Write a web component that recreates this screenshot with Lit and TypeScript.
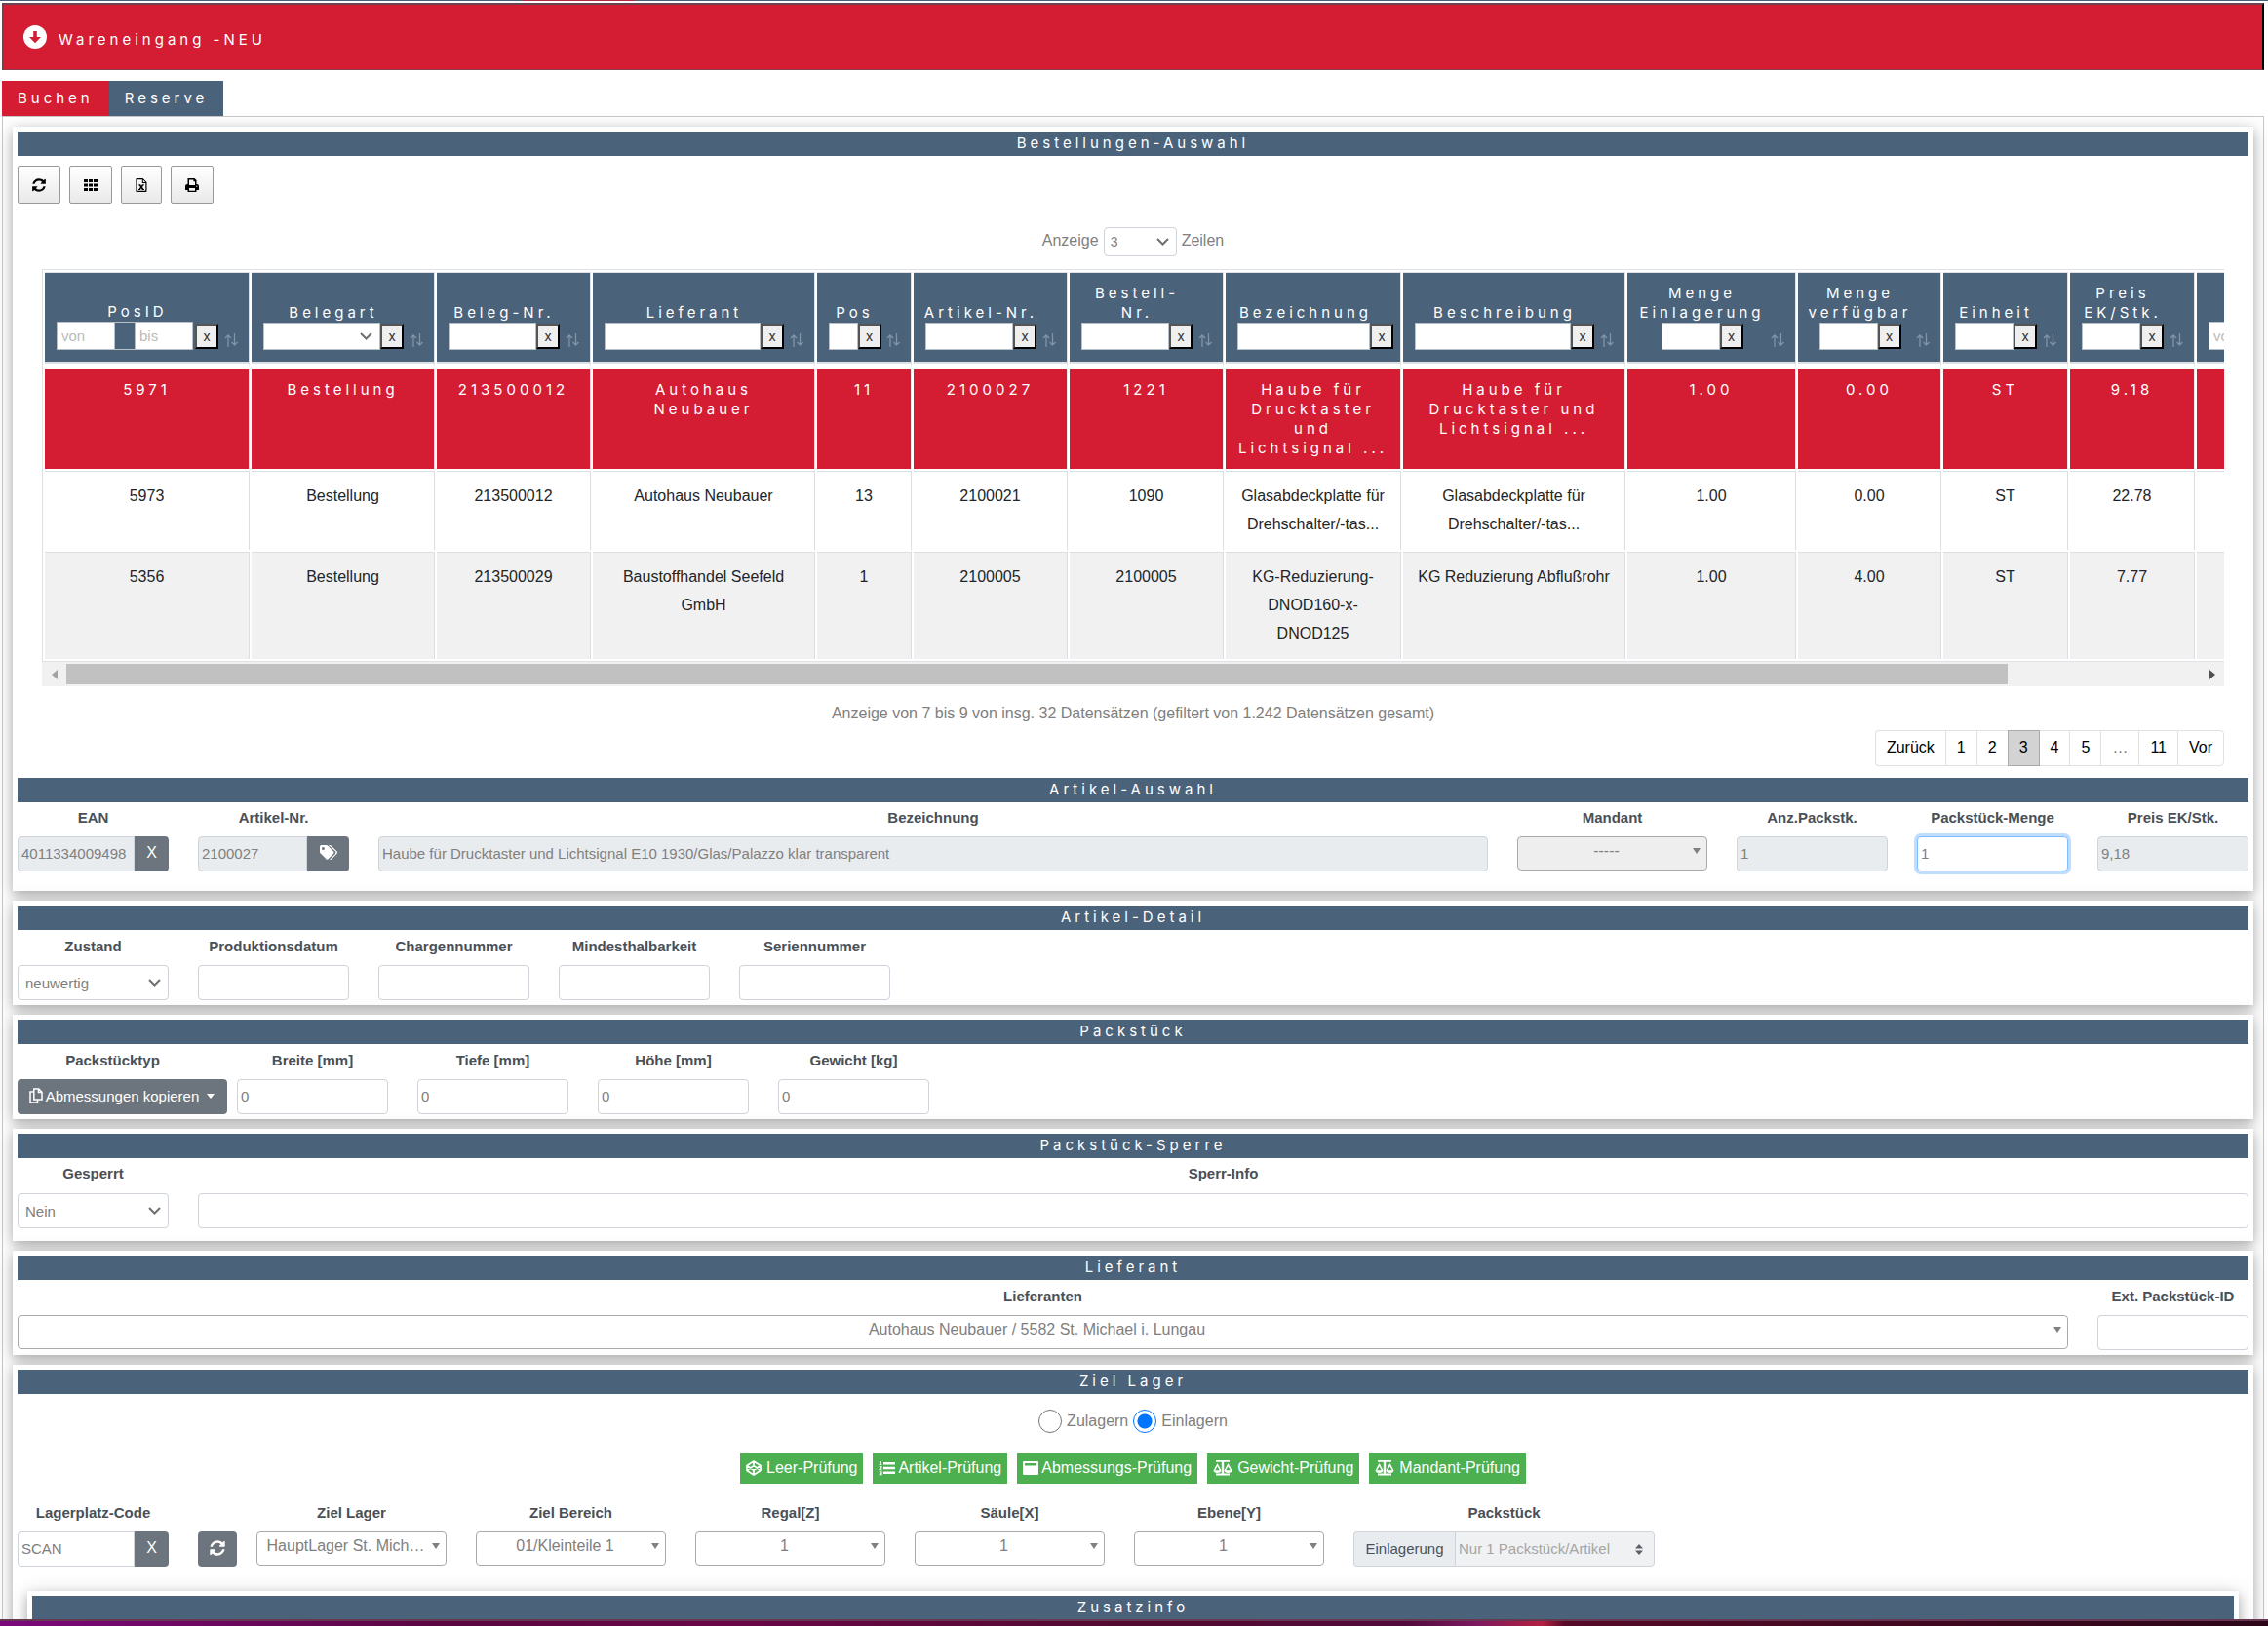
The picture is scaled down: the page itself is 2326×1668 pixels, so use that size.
import { LitElement, html, css, svg, nothing, TemplateResult } from "lit";
import { customElement, state } from "lit/decorators.js";

type Filter = "text" | "select" | "range";
interface Column {
  label: string;
  width: number;
  filter: Filter;
  input: number;
  sort: boolean;
}

const COLUMNS: Column[] = [
  { label: "PosID", width: 210, filter: "range", input: 60, sort: true },
  { label: "Belegart", width: 188, filter: "select", input: 120, sort: true },
  { label: "Beleg-Nr.", width: 158, filter: "text", input: 90, sort: true },
  { label: "Lieferant", width: 228, filter: "text", input: 160, sort: true },
  { label: "Pos", width: 97, filter: "text", input: 30, sort: true },
  { label: "Artikel-Nr.", width: 158, filter: "text", input: 90, sort: true },
  { label: "Bestell-\nNr.", width: 158, filter: "text", input: 90, sort: true },
  { label: "Bezeichnung", width: 180, filter: "text", input: 136, sort: false },
  { label: "Beschreibung", width: 228, filter: "text", input: 160, sort: true },
  { label: "Menge\nEinlagerung", width: 173, filter: "text", input: 60, sort: true },
  { label: "Menge\nverfügbar", width: 147, filter: "text", input: 60, sort: true },
  { label: "Einheit", width: 128, filter: "text", input: 60, sort: true },
  { label: "Preis\nEK/Stk.", width: 128, filter: "text", input: 60, sort: true },
  { label: "Preis", width: 210, filter: "range", input: 60, sort: true },
];

const ROWS: string[][] = [
  ["5971", "Bestellung", "213500012", "Autohaus\nNeubauer", "11", "2100027", "1221",
    "Haube für\nDrucktaster\nund\nLichtsignal ...", "Haube für\nDrucktaster und\nLichtsignal ...",
    "1.00", "0.00", "ST", "9.18", ""],
  ["5973", "Bestellung", "213500012", "Autohaus Neubauer", "13", "2100021", "1090",
    "Glasabdeckplatte für Drehschalter/-tas...", "Glasabdeckplatte für\nDrehschalter/-tas...",
    "1.00", "0.00", "ST", "22.78", ""],
  ["5356", "Bestellung", "213500029", "Baustoffhandel Seefeld GmbH", "1", "2100005", "2100005",
    "KG-Reduzierung-\nDNOD160-x-\nDNOD125", "KG Reduzierung Abflußrohr",
    "1.00", "4.00", "ST", "7.77", ""],
];

const icon = (w: number, h: number, box: string, body: unknown) =>
  html`<svg class="icon" width=${w} height=${h} viewBox=${box} fill="currentColor" aria-hidden="true">${body}</svg>`;

const refresh = (s: number) => icon(s, s, "0 0 1792 1792", svg`<path d="M1639 1056q0 5-1 7-64 268-268 434.5t-478 166.5q-146 0-282.5-55t-243.5-157l-129 129q-19 19-45 19t-45-19-19-45v-448q0-26 19-45t45-19h448q26 0 45 19t19 45-19 45l-137 137q71 66 161 102t187 36q134 0 250-65t186-179q11-17 53-117 8-23 30-23h192q13 0 22.5 9.5t9.5 22.5zm25-800v448q0 26-19 45t-45 19h-448q-26 0-45-19t-19-45 19-45l138-138q-148-137-349-137-134 0-250 65t-186 179q-11 17-53 117-8 23-30 23h-199q-13 0-22.5-9.5t-9.5-22.5v-7q65-268 270-434.5t480-166.5q146 0 284 55.5t245 156.5l130-129q19-19 45-19t45 19 19 45z"/>`);

const grid = icon(16, 16, "0 0 16 16", svg`<path d="M1 2h4v3H1zM6 2h4v3H6zM11 2h4v3h-4zM1 6.500h4v3H1zM6 6.500h4v3H6zM11 6.500h4v3h-4zM1 11h4v3H1zM6 11h4v3H6zM11 11h4v3h-4z"/>`);

const excel = icon(12, 16, "0 0 12 16", svg`<path fill-rule="evenodd" d="M1.200 1h6.300L11.500 5v9.200a.8.8 0 0 1-.8.8H1.200a.8.8 0 0 1-.8-.8V1.800A.8.8 0 0 1 1.200 1zm.4 1.200v11.600h8.700V6H6.800V2.200zM7.800 2.600V5h2.300z"/><path d="M3.200 7.200h2l.8 1.500.9-1.500h1.900v1h-.5L7 9.900l1.400 2h.6v1H6.800l-.9-1.600-1 1.600H3v-1h.6l1.400-2-1.300-1.700h-.5z"/>`);

const printer = icon(16, 16, "0 0 16 16", svg`<path fill-rule="evenodd" d="M3.500 1h7l2 2v4H13a2 2 0 0 1 2 2v4h-2.500v2h-9v-2H1V9a2 2 0 0 1 2-2h.5zM5 2.400V8h6V4.300H9.400V2.400zM5 11v2.700h6V11zm7.800-2.600a.7.700 0 1 0 0 1.400.7.700 0 0 0 0-1.400z"/>`);

const arrowDown = icon(24, 24, "0 0 24 24", svg`<path fill-rule="evenodd" d="M12 0a12 12 0 1 1 0 24 12 12 0 0 1 0-24zM10.200 6v6H6l6 6.300L18 12h-4.200V6z"/>`);

const tags = icon(20, 18, "0 0 20 18", svg`<path fill-rule="evenodd" d="M1 2.500A1.500 1.500 0 0 1 2.500 1h5.200c.5 0 1 .2 1.400.6l6 6a1.500 1.500 0 0 1 0 2.100l-5.500 5.600a1.500 1.500 0 0 1-2.100 0l-6-6A2 2 0 0 1 1 8zM4.400 2.900a1.500 1.500 0 1 0 0 3 1.500 1.500 0 0 0 0-3z"/><path d="M10 1h1.200c.5 0 1 .2 1.400.6l6 6a1.500 1.500 0 0 1 0 2.100L13 15.400a1.500 1.500 0 0 1-1.800.3l5.700-5.700a2 2 0 0 0 0-2.700z"/>`);

const copy = icon(14, 16, "0 0 14 16", svg`<path fill="none" stroke="currentColor" stroke-width="1.500" d="M4.800 1h5l3.200 3.200V12H4.800zM9.500 1v3.500H13M4.500 4H1v11h7.500v-2.500"/>`);

const codepen = icon(16, 16, "0 0 16 16", svg`<path fill="none" stroke="currentColor" stroke-width="1.700" stroke-linejoin="round" d="M8 1l7 4.500v5L8 15l-7-4.500v-5zM8 1v4.600M8 15v-4.600M1 5.500l7 4.900 7-4.900M1 10.500l7-4.900 7 4.900"/>`);

const listOl = icon(17, 16, "0 0 17 16", svg`<path d="M5 2h12v2.500H5zM5 6.800h12v2.500H5zM5 11.600h12v2.500H5zM1 1h1.800v3.200h.7V5H.6v-.8h.7V2H.8zM.6 6.200h2.900v1.700L1.900 9.300h1.700v.9H.5V9l1.800-1.600v-.3H.6zM.6 11.200h3v4H.6v-.9h1.900v-.6H1.200v-.9h1.300v-.7H.6z"/>`);

const windowIcon = icon(16, 16, "0 0 16 16", svg`<path fill-rule="evenodd" d="M1 1h14a1 1 0 0 1 1 1v12a1 1 0 0 1-1 1H1a1 1 0 0 1-1-1V2a1 1 0 0 1 1-1zm1 2v2.500h12V3z"/>`);

const scale = icon(20, 16, "0 0 20 16", svg`<path d="M3 0h5.500a1.700 1.700 0 0 1 3 0H17v1.800h-5.800v11.700H17v2H3v-2h5.800V1.800H3z"/><path fill-rule="evenodd" d="M4.500 3l4 7.500c0 1.500-1.800 2.500-4 2.500s-4-1-4-2.500zm0 3.200L2.300 10.300h4.400zM15.500 3l4 7.500c0 1.500-1.800 2.500-4 2.500s-4-1-4-2.500zm0 3.200l-2.200 4.100h4.400z"/>`);

const chevron = html`<svg class="chevron" width="13" height="8" viewBox="0 0 13 8" aria-hidden="true"><path d="M1 1l5.500 5.500L12 1" fill="none" stroke="currentColor" stroke-width="2"/></svg>`;
const caret = html`<svg class="caret" width="8" height="6" viewBox="0 0 8 6" aria-hidden="true"><path d="M0 0h8L4 6z" fill="#808080"/></svg>`;
const sortArrows = html`<svg class="sort" width="14" height="16" viewBox="0 0 14 16" aria-hidden="true"><path d="M4 15V3M1 6l3-3 3 3M10.500 1v12M7.500 10l3 3 3-3" fill="none" stroke="currentColor" stroke-width="1.300"/></svg>`;

@customElement("app-root")
export class AppRoot extends LitElement {
  @state() private selected = 0;

  static styles = css`
    :host {
      display: block;
      font-family: "Liberation Sans", Arial, sans-serif;
      font-size: 16px;
      color: #808080;
      background: #fff;
    }
    * { box-sizing: border-box; }
    button, input, select { font: inherit; color: inherit; margin: 0; }
    .icon { display: block; flex: none; }
    .shell { display: flex; flex-direction: column; height: 100vh; overflow: hidden; }
    .topline { height: 1px; flex: none; background: linear-gradient(90deg, #4a627a 23%, #b02a45 23%, #b02a45 28%, #4a627a 28%); }
    .content { flex: 1; min-height: 0; overflow: auto; scrollbar-width: none; padding: 2px 4px 0 2px; }
    .bottomline {
      height: 7px; flex: none; border-top: 2px solid #663852;
      background: linear-gradient(90deg, #7b087b, #5a0640 20%, #6a0648 32%, #520a30 50%, #520a3c 62%, #7a1860 65%, #b42040 68%, #550a28 69%, #2c0618);
    }
    .header {
      display: flex; align-items: center; gap: 12px; height: 69px; padding: 0 20px 0 20px;
      background: #d41d33; color: #fff; margin: 0 0 11px;
      border: solid; border-width: 2px 2px 1px 2px; border-color: #6a4550 #000 #8a3a4a #6a4550;
    }
    .brand, .tab { font-family: Inter, sans-serif; font-size: 15px; letter-spacing: 4px; font-weight: 400; }
    .brand { margin: 0; line-height: 20px; padding-top: 6px; }
    .tabs { display: flex; }
    .tab { color: #fff; height: 36px; padding: 0 16px 2px; border: 0; background: #4a627a; }
    .tab.active { background: #d41d33; }
    .pane { border: 1px solid #c8c8c8; padding: 10px; }
    .card {
      background: #fff; padding: 5px; margin-bottom: 10px;
      box-shadow: 0 4px 10px 0 rgba(0, 0, 0, 0.2), 0 4px 20px 0 rgba(0, 0, 0, 0.19);
    }
    .card.roomy { padding-bottom: 20px; }
    .card.medium { padding-bottom: 13px; }
    .card.nested { margin: 25px 10px 0; min-height: 120px; }
    .bar {
      font-family: Inter, sans-serif; font-size: 15px; font-weight: 400; letter-spacing: 4px;
      line-height: 23px; padding-bottom: 2px; text-align: center; background: #4a627a; color: #fff; margin: 0;
    }
    .toolbar { display: flex; gap: 9px; padding: 10px 0 24px; }
    .tool {
      width: 44px; height: 39px; padding: 0; display: grid; place-items: center; color: #000;
      border: 1px solid #999; border-radius: 2px; background: linear-gradient(#fff, #e9e9e9);
    }
    .tool.slim { width: 42px; }
    .length { display: flex; justify-content: center; align-items: center; gap: 5px; height: 30px; margin-bottom: 13px; }
    .length label { line-height: 26px; padding-bottom: 3px; }
    .box { position: relative; display: block; }
    .box select, .field-input {
      appearance: none; width: 100%; height: 36px; border: 1px solid #ced4da; border-radius: 4px;
      background: #fff; font-size: 15px; padding: 0 3px 1px; outline: 0; display: block;
    }
    .box select { padding: 0 24px 0 7px; }
    .chevron { position: absolute; right: 8px; top: 50%; margin-top: -4px; pointer-events: none; color: #707070; }
    .caret { position: absolute; right: 7px; top: 50%; margin-top: -6px; pointer-events: none; }
    .length .box { width: 75px; }
    .length select { height: 30px; font-size: 14px; padding-left: 6px; }
    .pick select { font-size: 16px; text-align-last: center; height: 35px; border-color: #aaa; padding: 0 20px 6px 8px; opacity: 1; }
    .pick select:disabled { background: #eee; color: #808080; }

    .grid-wrap { margin: 0 25px; }
    .scroller { overflow-x: auto; scrollbar-width: none; }
    table { table-layout: fixed; border-collapse: separate; border-spacing: 2px; border: 1px solid #dee2e6; width: max-content; }
    th {
      position: relative; background: #4a627a; color: #fff; vertical-align: bottom; height: 98px;
      padding: 10px 29px 14px 10px; border: solid; border-width: 1px 1px 4px 0; border-color: #dee2e6 #dee2e6 #fff;
      box-shadow: inset 0 -2px #dee2e6; background-clip: padding-box;
      font: 400 15px/20px Inter, sans-serif; letter-spacing: 4px; text-align: center; white-space: pre;
    }
    th.plain { padding: 10px 7px 14px 12px; }
    th.plain .name { padding-right: 20px; }
    .filter { display: flex; justify-content: center; align-items: center; width: max-content; margin: 0 auto; letter-spacing: 0; }
    .filter input, .filter select {
      appearance: none; height: 28px; border: 1px solid #b8bfc6; border-radius: 0; background: #fff; padding: 0 4px;
      font: 15px "Liberation Sans", Arial, sans-serif; color: #808080; display: block;
    }
    .filter select { width: 100%; }
    .filter input::placeholder { color: #bbb; }
    .range { display: flex; justify-content: space-between; width: 140px; margin-right: 2px; border: solid #b8bfc6; border-width: 1px 0; }
    .range input { border-width: 0 1px; height: 27px; }
    .clear {
      width: 24px; height: 26px; padding: 0; background: #efefef; color: #333;
      border: 2px solid; border-color: #555 #000 #000 #555; font: 14px/20px Inter, sans-serif;
    }
    .sort { position: absolute; right: 11px; bottom: 16px; color: #8195a8; }
    td {
      padding: 10px 10px 12px; vertical-align: top; text-align: center; line-height: 29px; color: #212529;
      border: solid #dcdfe2; border-width: 1px 1px 0 0; white-space: pre-line;
    }
    tr.odd td { background: #f1f1f1; }
    tr.selected td {
      background: #d41d33; color: #fff; border-width: 0 1px 0 0; border-color: #f4e4e6; padding: 11px 8px;
      font: 400 15px/20px Inter, sans-serif; letter-spacing: 4px;
    }
    .hbar { display: flex; align-items: center; height: 25px; background: #f1f1f1; gap: 0; }
    .hbar .arrow { width: 25px; height: 25px; display: grid; place-items: center; border: 0; padding: 0; background: none; }
    .track { flex: 1; }
    .thumb { height: 21px; width: 91%; background: #c1c1c1; }
    .info { text-align: center; line-height: 24px; margin: 16px 0 5px; }
    .pager { display: flex; justify-content: flex-end; margin: 0 25px 12px; }
    .pager button {
      height: 37px; padding: 0 11px 2px; background: #fff; color: #000; border: 1px solid #dee2e6; border-right-width: 0;
    }
    .pager button:first-child { border-radius: 4px 0 0 4px; }
    .pager button:last-child { border-radius: 0 4px 4px 0; border-right-width: 1px; }
    .pager button:disabled { color: #777; }
    .pager button.current { background: #d3d3d3; border: 1px solid #aaa; margin-right: -1px; z-index: 1; }

    .row { display: grid; gap: 0 30px; align-items: start; justify-content: start; }
    .row.article { grid-template-columns: 155px 155px minmax(200px, 1fr) 195px 155px 155px 155px; justify-content: stretch; }
    .row.detail { grid-template-columns: repeat(5, 155px); }
    .row.pack { grid-template-columns: 195px repeat(4, 155px); }
    .row.lock { grid-template-columns: 155px 1fr; justify-content: stretch; }
    .row.supplier { grid-template-columns: 1fr 155px; justify-content: stretch; }
    .row.target { grid-template-columns: 155px 40px 185px repeat(4, 195px) 309px; margin-top: 13px; }
    .target .after { margin-left: -10px; }
    .caption { display: block; text-align: center; font-size: 15px; font-weight: 700; line-height: 34px; height: 36px; color: #495057; white-space: nowrap; }
    .article .caption { line-height: 32px; height: 35px; }
    .lock .caption { line-height: 32px; }
    .field-input:disabled, .field-input[readonly] { background: #e9ecef; color: #808080; }
    .field-input::placeholder { color: #808080; }
    .field-input.active { border-color: #80bdff; box-shadow: 0 0 0 3px #bfdeff; }
    .group { display: flex; }
    .group .field-input { border-radius: 4px 0 0 4px; flex: 1; min-width: 0; }
    .addon {
      background: #6c757d; color: #fff; border: 0; height: 36px; width: 35px; padding: 0 0 2px;
      display: grid; place-items: center; border-radius: 0 4px 4px 0; font-size: 16px; flex: none;
    }
    .addon.wide { width: 43px; }
    .addon.solo { width: 40px; border-radius: 4px; margin-top: 36px; }
    .dropdown {
      display: flex; align-items: center; justify-content: center; gap: 3px; height: 36px; width: 215px; padding: 0 0 2px;
      background: #6c757d; color: #fff; border: 0; border-radius: 4px; font-size: 15px; white-space: nowrap;
    }
    .prefix {
      height: 36px; width: 104px; display: grid; place-items: center; font-size: 15px; color: #495057; flex: none;
      padding-bottom: 1px;
      background: #e9ecef; border: 1px solid #ced4da; border-right: 0; border-radius: 4px 0 0 4px;
    }
    .group .box { flex: 1; }
    .group .box select { border-radius: 0 4px 4px 0; background: #f0f1f2; color: #a5a5a5; opacity: 1; padding: 0 24px 1px 3px; }
    .updown { position: absolute; right: 12px; top: 13px; pointer-events: none; }
    .radios { display: flex; justify-content: center; align-items: center; gap: 5px; padding: 16px 0 21px; line-height: 24px; }
    .radios input {
      appearance: none; width: 24px; height: 24px; border: 1px solid #777; border-radius: 50%; background: #fff;
    }
    .radios input:checked { border-color: #0075ff; background: radial-gradient(circle, #0075ff 7px, #fff 8px); }
    .checks { display: flex; justify-content: center; gap: 10px; }
    .check {
      display: flex; align-items: center; gap: 5px; height: 31px; padding: 0 6px 2px; border: 0;
      background: #4caf50; color: #fff;
    }
    .check.tight { gap: 3px; }
  `;

  firstUpdated() {
    this.renderRoot.querySelector<HTMLInputElement>("#qty")?.focus({ preventScroll: true });
  }

  private filter(c: Column) {
    const name = c.label.replace("\n", " ");
    if (c.filter === "range") {
      return html`<div class="filter"><span class="range">
        <input style="width:${c.input}px" placeholder="von" aria-label="${name} von" />
        <input style="width:${c.input}px" placeholder="bis" aria-label="${name} bis" /></span>
        <button class="clear">x</button></div>`;
    }
    if (c.filter === "select") {
      return html`<div class="filter"><span class="box" style="width:${c.input}px"><select aria-label=${name}><option></option></select>${chevron}</span><button class="clear">x</button></div>`;
    }
    return html`<div class="filter"><input style="width:${c.input}px" aria-label=${name} /><button class="clear">x</button></div>`;
  }

  private field(id: string, label: string, control: TemplateResult) {
    return html`<div class="field"><label class="caption" for=${id}>${label}</label>${control}</div>`;
  }

  private input(id: string, value = "", locked = false) {
    return html`<input class="field-input" id=${id} .value=${value} ?readonly=${locked} />`;
  }

  private select(id: string, value: string) {
    return html`<span class="box"><select id=${id}><option>${value}</option></select>${chevron}</span>`;
  }

  private pick(id: string, value: string, locked = false) {
    return html`<span class="box pick"><select id=${id} ?disabled=${locked}><option>${value}</option></select>${caret}</span>`;
  }

  private table() {
    return html`<div class="grid-wrap">
      <div class="scroller">
        <table>
          <colgroup>${COLUMNS.map((c) => html`<col style="width:${c.width}px" />`)}</colgroup>
          <thead><tr>${COLUMNS.map((c, i) => html`<th scope="col" class=${c.sort ? "" : "plain"}>${i === COLUMNS.length - 1 ? nothing : html`<div class="name">${c.label}</div>`}${this.filter(c)}${c.sort ? sortArrows : nothing}</th>`)}</tr></thead>
          <tbody>${ROWS.map((r, i) => html`<tr class=${i === this.selected ? "selected" : i % 2 ? "even" : "odd"} @click=${() => (this.selected = i)}>${r.map((v) => html`<td>${v}</td>`)}</tr>`)}</tbody>
        </table>
      </div>
      <div class="hbar">
        <button class="arrow" aria-label="Nach links"><svg width="6" height="10" viewBox="0 0 6 10"><path d="M6 0v10L0 5z" fill="#a3a3a3"/></svg></button>
        <div class="track"><div class="thumb"></div></div>
        <button class="arrow" aria-label="Nach rechts"><svg width="6" height="10" viewBox="0 0 6 10"><path d="M0 0v10l6-5z" fill="#505050"/></svg></button>
      </div>
    </div>`;
  }

  render() {
    return html`<div class="shell">
      <div class="topline"></div>
      <div class="content">
        <header class="header">${arrowDown}<h1 class="brand">Wareneingang -NEU</h1></header>
        <nav class="tabs"><button class="tab active">Buchen</button><button class="tab">Reserve</button></nav>
        <main class="pane">
          <section class="card roomy">
            <h2 class="bar">Bestellungen-Auswahl</h2>
            <div class="toolbar">
              <button class="tool" aria-label="Aktualisieren">${refresh(16)}</button>
              <button class="tool" aria-label="Spalten">${grid}</button>
              <button class="tool slim" aria-label="Excel">${excel}</button>
              <button class="tool" aria-label="Drucken">${printer}</button>
            </div>
            <div class="length">
              <label for="len">Anzeige</label>
              ${this.select("len", "3")}
              <label for="len">Zeilen</label>
            </div>
            ${this.table()}
            <p class="info">Anzeige von 7 bis 9 von insg. 32 Datensätzen (gefiltert von 1.242 Datensätzen gesamt)</p>
            <nav class="pager">
              ${["Zurück", "1", "2", "3", "4", "5", "…", "11", "Vor"].map((p) => html`<button class=${p === "3" ? "current" : ""} ?disabled=${p === "…"}>${p}</button>`)}
            </nav>
            <h2 class="bar">Artikel-Auswahl</h2>
            <div class="row article">
              ${this.field("ean", "EAN", html`<div class="group">${this.input("ean", "4011334009498", true)}<button class="addon">X</button></div>`)}
              ${this.field("artnr", "Artikel-Nr.", html`<div class="group">${this.input("artnr", "2100027", true)}<button class="addon wide" aria-label="Artikel">${tags}</button></div>`)}
              ${this.field("bez", "Bezeichnung", this.input("bez", "Haube für Drucktaster und Lichtsignal E10 1930/Glas/Palazzo klar transparent", true))}
              ${this.field("mandant", "Mandant", this.pick("mandant", "-----", true))}
              ${this.field("anz", "Anz.Packstk.", this.input("anz", "1", true))}
              ${this.field("qty", "Packstück-Menge", html`<input class="field-input active" id="qty" .value=${"1"} />`)}
              ${this.field("preis", "Preis EK/Stk.", this.input("preis", "9,18", true))}
            </div>
          </section>

          <section class="card">
            <h2 class="bar">Artikel-Detail</h2>
            <div class="row detail">
              ${this.field("zustand", "Zustand", this.select("zustand", "neuwertig"))}
              ${this.field("prod", "Produktionsdatum", this.input("prod"))}
              ${this.field("charge", "Chargennummer", this.input("charge"))}
              ${this.field("mhd", "Mindesthalbarkeit", this.input("mhd"))}
              ${this.field("serie", "Seriennummer", this.input("serie"))}
            </div>
          </section>

          <section class="card">
            <h2 class="bar">Packstück</h2>
            <div class="row pack">
              ${this.field("typ", "Packstücktyp", html`<button class="dropdown" id="typ">${copy}<span>Abmessungen kopieren</span><svg width="14" height="5" viewBox="0 0 14 5" aria-hidden="true"><path d="M5 0h8L9 5z" fill="#fff"/></svg></button>`)}
              ${this.field("breite", "Breite [mm]", this.input("breite", "0"))}
              ${this.field("tiefe", "Tiefe [mm]", this.input("tiefe", "0"))}
              ${this.field("hoehe", "Höhe [mm]", this.input("hoehe", "0"))}
              ${this.field("gewicht", "Gewicht [kg]", this.input("gewicht", "0"))}
            </div>
          </section>

          <section class="card medium">
            <h2 class="bar">Packstück-Sperre</h2>
            <div class="row lock">
              ${this.field("gesperrt", "Gesperrt", this.select("gesperrt", "Nein"))}
              ${this.field("sperr", "Sperr-Info", this.input("sperr"))}
            </div>
          </section>

          <section class="card">
            <h2 class="bar">Lieferant</h2>
            <div class="row supplier">
              ${this.field("lieferanten", "Lieferanten", this.pick("lieferanten", "Autohaus Neubauer / 5582 St. Michael i. Lungau"))}
              ${this.field("ext", "Ext. Packstück-ID", this.input("ext"))}
            </div>
          </section>

          <section class="card">
            <h2 class="bar">Ziel Lager</h2>
            <div class="radios">
              <input type="radio" name="mode" id="zu" /><label for="zu">Zulagern</label>
              <input type="radio" name="mode" id="ein" checked /><label for="ein">Einlagern</label>
            </div>
            <div class="checks">
              <button class="check">${codepen}Leer-Prüfung</button>
              <button class="check tight">${listOl}Artikel-Prüfung</button>
              <button class="check tight">${windowIcon}Abmessungs-Prüfung</button>
              <button class="check">${scale}Gewicht-Prüfung</button>
              <button class="check">${scale}Mandant-Prüfung</button>
            </div>
            <div class="row target">
              ${this.field("code", "Lagerplatz-Code", html`<div class="group"><input class="field-input" id="code" placeholder="SCAN" /><button class="addon">X</button></div>`)}
              <button class="addon solo" aria-label="Neu laden">${refresh(18)}</button>
              <div class="after">${this.field("lager", "Ziel Lager", this.pick("lager", "HauptLager St. Mich…"))}</div>
              ${this.field("bereich", "Ziel Bereich", this.pick("bereich", "01/Kleinteile 1"))}
              ${this.field("regal", "Regal[Z]", this.pick("regal", "1"))}
              ${this.field("saeule", "Säule[X]", this.pick("saeule", "1"))}
              ${this.field("ebene", "Ebene[Y]", this.pick("ebene", "1"))}
              ${this.field("stueck", "Packstück", html`<div class="group"><span class="prefix">Einlagerung</span><span class="box"><select id="stueck" disabled><option>Nur 1 Packstück/Artikel</option></select><svg class="updown" width="8" height="11" viewBox="0 0 8 11" aria-hidden="true"><path d="M4 0l4 4.500H0zM4 11L0 6.500h8z" fill="#5a6068"/></svg></span></div>`)}
            </div>
            <section class="card nested"><h2 class="bar">Zusatzinfo</h2></section>
          </section>
        </main>
      </div>
      <div class="bottomline"></div>
    </div>`;
  }
}
